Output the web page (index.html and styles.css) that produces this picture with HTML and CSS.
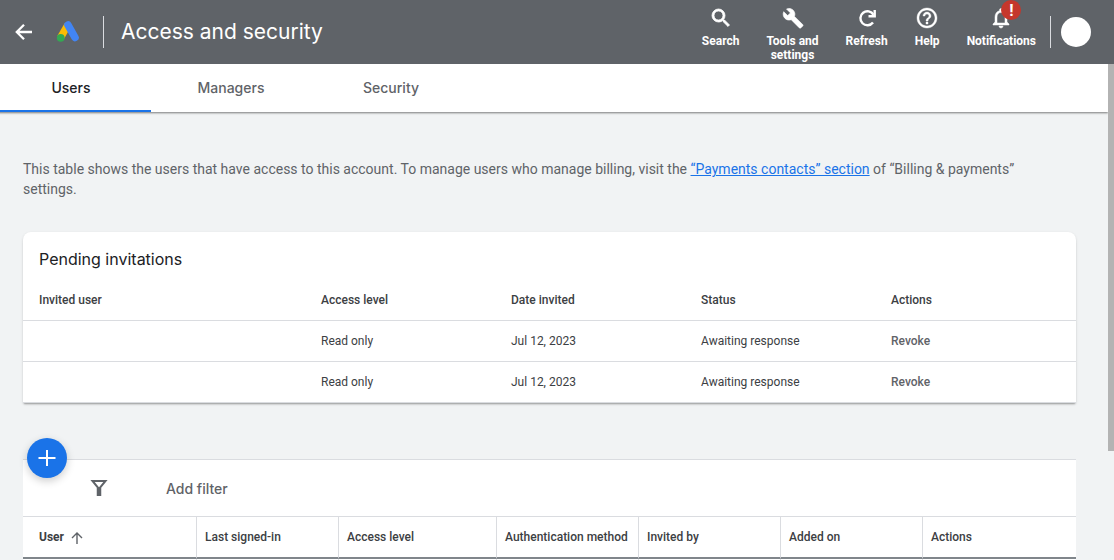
FILE: index.html
```html
<!DOCTYPE html>
<html lang="en">
<head>
    <meta charset="utf-8">
    <title>Access and security</title>
    <link rel="stylesheet" href="styles.css">
</head>
<body>
    <header class="topbar">
        <button class="back" aria-label="Back">
            <svg width="20" height="20" viewBox="0 0 20 20" fill="none" stroke="#fff" stroke-width="2.300"><path d="M19 10H4M11 2.800L3.800 10l7.200 7.200"/></svg>
        </button>
        <svg class="logo" width="24" height="24" viewBox="0 0 24 24">
            <path d="M11.800 5L4.600 17.500" stroke="#fbbc04" stroke-width="7.400" />
            <path d="M12 5l7 12.500" stroke="#4285f4" stroke-width="7.600" stroke-linecap="round"/>
            <circle cx="4.700" cy="17.800" r="3.900" fill="#34a853"/>
        </svg>
        <h1>Access and security</h1>
        <nav class="tools">
            <button class="tool">
                <svg width="24" height="24" viewBox="0 0 24 24" fill="#fff"><path d="M15.500 14h-.79l-.28-.27A6.471 6.471 0 0 0 16 9.500 6.500 6.500 0 1 0 9.500 16c1.610 0 3.090-.59 4.230-1.570l.27.28v.79l5 4.990L20.490 19l-4.990-5zm-6 0C7.010 14 5 11.990 5 9.500S7.010 5 9.500 5 14 7.010 14 9.500 11.990 14 9.500 14z" stroke="#fff" stroke-width=".8"/></svg>
                <span>Search</span>
            </button>
            <button class="tool">
                <svg width="24" height="24" viewBox="0 0 24 24" fill="#fff"><path d="M21.700 18.600l-8.200-8.200c.8-2.100.4-4.500-1.300-6.200C10.400 2.400 7.700 2 5.500 3l3.900 3.900-2.700 2.700-4-3.900c-1 2.200-.6 4.900 1.300 6.700 1.700 1.700 4.100 2.100 6.200 1.300l8.200 8.200c.4.4 1 .4 1.400 0l2-2c.4-.3.400-1-.1-1.300z" stroke="#fff" stroke-width=".6"/></svg>
                <span>Tools and<br>settings</span>
            </button>
            <button class="tool">
                <svg width="24" height="24" viewBox="0 0 24 24" fill="none" stroke="#fff" stroke-width="2.400"><path d="M18.500 8.800A7 7 0 1 0 18 16.500"/><path d="M19.700 4v6.300H13.500"/></svg>
                <span>Refresh</span>
            </button>
            <button class="tool">
                <svg width="24" height="24" viewBox="0 0 24 24" fill="#fff"><path stroke="#fff" stroke-width=".4" d="M11 18h2v-2h-2v2zm1-16C6.480 2 2 6.480 2 12s4.480 10 10 10 10-4.480 10-10S17.520 2 12 2zm0 18c-4.410 0-8-3.590-8-8s3.590-8 8-8 8 3.590 8 8-3.590 8-8 8zm0-14c-2.210 0-4 1.790-4 4h2c0-1.100.9-2 2-2s2 .9 2 2c0 2-3 1.750-3 5h2c0-2.250 3-2.500 3-5 0-2.210-1.790-4-4-4z"/></svg>
                <span>Help</span>
            </button>
            <button class="tool">
                <svg width="24" height="24" viewBox="0 0 24 24" fill="#fff"><path stroke="#fff" stroke-width=".5" d="M12 22c1.100 0 2-.9 2-2h-4c0 1.100.9 2 2 2zm6-6v-5c0-3.070-1.630-5.640-4.500-6.320V4a1.500 1.500 0 0 0-3 0v.68C7.640 5.360 6 7.920 6 11v5l-2 2v1h16v-1l-2-2zm-2 1H8v-6c0-2.480 1.510-4.500 4-4.500s4 2.020 4 4.500v6z"/></svg>
                <i class="badge">!</i>
                <span>Notifications</span>
            </button>
        </nav>
        <button class="avatar" aria-label="Account"></button>
    </header>

    <div class="page">
        <div class="content">
            <nav class="tabs">
                <a class="tab active" href="#users">Users</a>
                <a class="tab" href="#managers">Managers</a>
                <a class="tab" href="#security">Security</a>
            </nav>

            <main>
                <p class="intro">This table shows the users that have access to this account. To manage users who manage billing, visit the <a href="#payments">“Payments contacts” section</a> of “Billing &amp; payments” settings.</p>

                <section class="card">
                    <h2>Pending invitations</h2>
                    <table class="invites">
                        <thead>
                            <tr>
                                <th class="w-user">Invited user</th>
                                <th class="w-info">Access level</th>
                                <th class="w-info">Date invited</th>
                                <th class="w-info">Status</th>
                                <th>Actions</th>
                            </tr>
                        </thead>
                        <tbody>
                            <tr>
                                <td></td>
                                <td>Read only</td>
                                <td>Jul 12, 2023</td>
                                <td>Awaiting response</td>
                                <td><button class="revoke">Revoke</button></td>
                            </tr>
                            <tr>
                                <td></td>
                                <td>Read only</td>
                                <td>Jul 12, 2023</td>
                                <td>Awaiting response</td>
                                <td><button class="revoke">Revoke</button></td>
                            </tr>
                        </tbody>
                    </table>
                </section>

                <section class="users">
                    <button class="fab" aria-label="Add user">
                        <svg width="24" height="24" viewBox="0 0 24 24" stroke="#fff" stroke-width="2"><path d="M12 4v16M3.500 12h17"/></svg>
                    </button>
                    <div class="filter">
                        <svg width="18" height="18" viewBox="0 0 18 18" fill="none" stroke="#5f6368" stroke-width="2"><path d="M2.500 2h13L9 10z"/><path d="M9 9v8" stroke-width="4.500"/></svg>
                        <button class="add-filter">Add filter</button>
                    </div>
                    <table class="user-list">
                        <thead>
                            <tr>
                                <th class="c-user">User
                                    <svg width="12" height="12" viewBox="0 0 12 12" fill="none" stroke="#5f6368" stroke-width="1.400"><path d="M6 12V1.500M1 6l5-5 5 5"/></svg>
                                </th>
                                <th class="c-info">Last signed-in</th>
                                <th class="c-level">Access level</th>
                                <th class="c-info">Authentication method</th>
                                <th class="c-info">Invited by</th>
                                <th class="c-info">Added on</th>
                                <th>Actions</th>
                            </tr>
                        </thead>
                        <tbody>
                            <tr><td></td><td></td><td></td><td></td><td></td><td></td><td></td></tr>
                        </tbody>
                    </table>
                </section>
            </main>
        </div>
        <div class="scrollbar"><div class="thumb"></div></div>
    </div>
</body>
</html>
```
FILE: styles.css
```css
* {
    box-sizing: border-box;
}

body {
    margin: 0;
    height: 100vh;
    display: flex;
    flex-direction: column;
    overflow: hidden;
    background: #f1f3f4;
    color: #3c4043;
    font-family: Roboto, Arial, sans-serif;
    font-size: 12px;
}

button {
    padding: 0;
    border: none;
    background: none;
    color: inherit;
    font: inherit;
    cursor: pointer;
}

svg {
    display: block;
}

/* top bar */
.topbar {
    display: flex;
    align-items: center;
    flex-shrink: 0;
    height: 64px;
    padding: 0 23px 0 13px;
    background: #5f6368;
    color: #fff;
}

.logo {
    margin: 0 23px;
}

h1 {
    margin: 0;
    padding-left: 17px;
    border-left: 1px solid #dadce0;
    font-family: Inter, sans-serif;
    font-size: 21px;
    font-weight: 400;
    line-height: 32px;
}

.tools {
    display: flex;
    align-items: flex-start;
    align-self: stretch;
    gap: 27px;
    margin-left: auto;
    padding-top: 6px;
}

.tool {
    position: relative;
    display: flex;
    flex-direction: column;
    align-items: center;
    gap: 4px;
    font-weight: 700;
    line-height: 14px;
}

.badge {
    position: absolute;
    top: -6px;
    left: 50%;
    width: 20px;
    height: 20px;
    border-radius: 50%;
    background: #c5372c;
    font-size: 16px;
    font-style: normal;
    line-height: 21px;
    text-align: center;
}

.avatar {
    display: flex;
    align-items: center;
    height: 32px;
    margin-left: 14px;
    padding-left: 10px;
    border-left: 1px solid #dadce0;
}

.avatar::after {
    content: "";
    width: 30px;
    height: 30px;
    border-radius: 50%;
    background: #fff;
}

/* page and scrollbar */
.page {
    display: flex;
    flex: 1;
    min-height: 0;
}

.content {
    flex: 1;
    min-width: 0;
    overflow: hidden;
}

.scrollbar {
    width: 6px;
}

.thumb {
    height: 78%;
    background: #b3b3b3;
}

.tabs {
    display: flex;
    height: 48px;
    margin-left: -9px;
    background: #fff;
    box-shadow: 0 1px 2px rgba(0,0,0,0.5);
}

.tab {
    width: 160px;
    border-bottom: 2px solid transparent;
    color: #5f6368;
    font-family: Inter, sans-serif;
    font-size: 14px;
    font-weight: 500;
    line-height: 48px;
    text-align: center;
    text-decoration: none;
}

.tab.active {
    border-color: #1a73e8;
    color: #202124;
}

main {
    padding: 47px 32px 0 23px;
}

.intro {
    margin: 0 0 33px;
    padding-right: 32px;
    color: #5f6368;
    font-size: 14px;
    line-height: 20px;
}

.intro a {
    color: #1a73e8;
}

/* tables */
table {
    width: 100%;
    border-collapse: separate;
    border-spacing: 0;
    table-layout: fixed;
}

th,
td {
    padding: 0;
    text-align: left;
    white-space: nowrap;
}

th {
    font-weight: 500;
}

.card {
    background: #fff;
    border-radius: 8px 8px 0 0;
    box-shadow: 0 2px 2px -1px rgba(0,0,0,0.3), 0 1px 3px rgba(0,0,0,0.12);
}

h2 {
    margin: 0;
    padding: 15px 16px 9px;
    color: #202124;
    font-family: Inter, sans-serif;
    font-size: 16px;
    font-weight: 400;
    line-height: 24px;
}

.invites th,
.invites td {
    height: 41px;
    padding-left: 16px;
    border-bottom: 1px solid #dadce0;
}

.w-user {
    width: 282px;
}

.w-info {
    width: 190px;
}

.revoke {
    color: #5f6368;
    font-weight: 500;
}

.users {
    position: relative;
    margin-top: 56px;
    border-top: 1px solid #dadce0;
    background: #fff;
}

.fab {
    position: absolute;
    top: -22px;
    left: 4px;
    display: flex;
    align-items: center;
    justify-content: center;
    width: 40px;
    height: 40px;
    border-radius: 50%;
    background: #1a73e8;
    box-shadow: 0 3px 8px rgba(0,0,0,0.2);
}

.filter {
    display: flex;
    align-items: center;
    gap: 58px;
    height: 56px;
    padding-left: 67px;
}

.add-filter {
    color: #5f6368;
    font-family: Inter, sans-serif;
    font-size: 14px;
    font-weight: 500;
}

.user-list th,
.user-list td {
    padding-left: 8px;
    border-right: 1px solid #dadce0;
}

.user-list th {
    height: 43px;
    border-top: 1px solid #dadce0;
    border-bottom: 2px solid #80868b;
}

.user-list td {
    height: 40px;
}

.user-list th:first-child {
    padding-left: 16px;
}

.user-list th:last-child,
.user-list td:last-child {
    border-right: none;
}

.user-list svg {
    display: inline-block;
    margin-left: 4px;
    vertical-align: -3px;
}

.c-user {
    width: 174px;
    font-weight: 700;
}

.c-info {
    width: 142px;
}

.c-level {
    width: 158px;
}
```
